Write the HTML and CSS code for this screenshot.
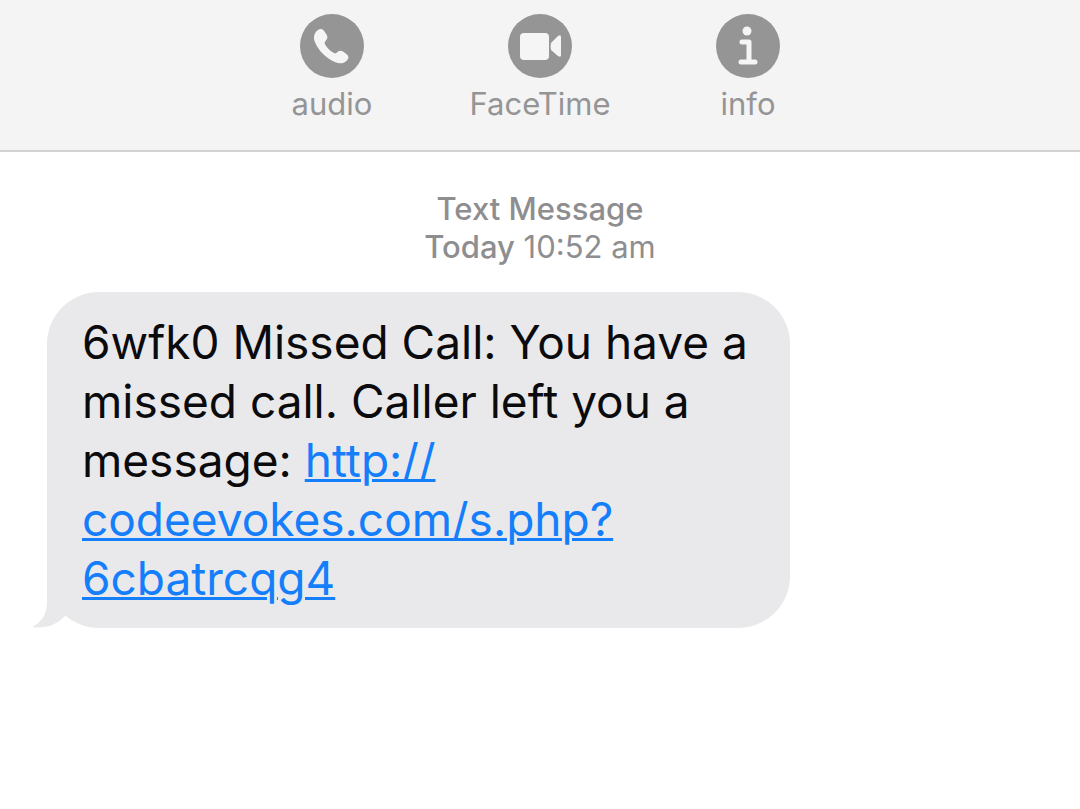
FILE: index.html
```html
<!DOCTYPE html>
<html lang="en">
<head>
  <meta charset="utf-8">
  <meta name="viewport" content="width=device-width, initial-scale=1">
  <title>Messages</title>
  <link rel="stylesheet" href="styles.css">
</head>
<body>

  <header class="toolbar">
    <button type="button" class="action">
      <svg class="action-icon" viewBox="0 0 64 64" aria-hidden="true">
        <circle cx="32" cy="32" r="32" fill="#959595"/>
        <path d="M18 16c2-1.600 4.500-1.300 6 .8l2.600 4c1.300 2 1 4-.6 5.600-1.500 1.500-1.700 2.600-.6 4.500 1.900 3.100 4.500 5.700 7.600 7.700 1.900 1.200 3 1 4.500-.5 1.700-1.700 3.600-1.900 5.500-.6l3.700 2.700c2.100 1.500 2.300 3.800.6 5.800-3 3.500-7.200 4.300-12 2.200C25.800 44 18.500 36.800 14.900 28c-1.800-4.600-.8-9.300 3.100-12z" fill="#f5f5f5"/>
      </svg>
      <span>audio</span>
    </button>
    <button type="button" class="action">
      <svg class="action-icon" viewBox="0 0 64 64" aria-hidden="true">
        <circle cx="32" cy="32" r="32" fill="#959595"/>
        <rect x="12" y="19" width="29" height="27" rx="4" fill="#f5f5f5"/>
        <path d="M43 29l7-7q3-2 3 1v18q0 3-3 1l-7-6q-1-4 0-7z" fill="#f5f5f5"/>
      </svg>
      <span>FaceTime</span>
    </button>
    <button type="button" class="action">
      <svg class="action-icon" viewBox="0 0 64 64" aria-hidden="true">
        <circle cx="32" cy="32" r="32" fill="#959595"/>
        <circle cx="31" cy="17" r="4.500" fill="#f5f5f5"/>
        <path d="M26 28h7v20M25 48h14" fill="none" stroke="#f5f5f5" stroke-width="5" stroke-linecap="round" stroke-linejoin="round"/>
      </svg>
      <span>info</span>
    </button>
  </header>

  <main class="thread">
    <p class="stamp"><b>Text Message</b><br><b>Today</b> 10:52 am</p>

    <div class="bubble">
      <p>6wfk0 Missed Call: You have a missed call. Caller left you a message: <a href="#">http://<wbr>codeevokes.com/s.php?<wbr>6cbatrcqg4</a></p>
      <svg class="tail" viewBox="0 0 48 56" aria-hidden="true">
        <path d="M15 0v30C15 42 10 50 0 55c13 2 24-2 32-10L48 30V0z" fill="#e9e9eb"/>
      </svg>
    </div>
  </main>

</body>
</html>
```

FILE: styles.css
```css
* {
  box-sizing: border-box;
}

body {
  margin: 0;
  background-color: #fff;
  font-family: Inter, "Liberation Sans", sans-serif;
}

p {
  margin: 0;
}

.toolbar {
  display: flex;
  justify-content: center;
  gap: 8px;
  padding: 14px 0 28px;
  background-color: #f4f4f5;
  border-bottom: 2px solid #d2d2d2;
}

.action {
  display: flex;
  flex-direction: column;
  align-items: center;
  gap: 8px;
  width: 200px;
  padding: 0;
  border: none;
  background: none;
  color: #959595;
  font-family: inherit;
  font-size: 31px;
  line-height: 36px;
  cursor: pointer;
}

.action-icon {
  width: 64px;
  height: 64px;
}

.thread {
  padding: 38px 47px;
}

.stamp {
  color: #8e8e90;
  font-size: 31px;
  line-height: 38px;
  text-align: center;
}

.stamp b {
  font-weight: 500;
}

.bubble {
  position: relative;
  width: 743px;
  max-width: 100%;
  margin-top: 26px;
  padding: 21px 32px 20px 35px;
  background-color: #e9e9eb;
  border-radius: 52px;
  color: #0b0b0d;
  font-size: 46px;
  line-height: 59px;
}

.bubble a {
  color: #147efb;
  text-decoration-thickness: 3px;
}

/* little hook under the left corner */
.tail {
  position: absolute;
  left: -15px;
  bottom: 0;
  width: 48px;
  height: 56px;
}
```
